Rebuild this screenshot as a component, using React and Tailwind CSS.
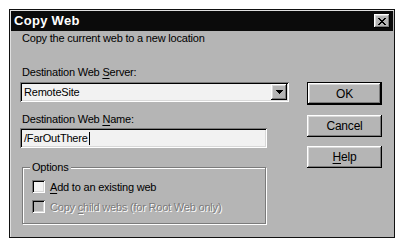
const raised = 'shadow-[inset_-1px_-1px_0_#000,inset_1px_1px_0_#fff,inset_-2px_-2px_0_#7b7b7b,inset_2px_2px_0_#d8d8d8]'
const sunken = 'shadow-[inset_1px_1px_0_#7b7b7b,inset_-1px_-1px_0_#fff,inset_2px_2px_0_#000,inset_-2px_-2px_0_#d8d8d8]'

function Btn({ children, isDefault, className = '' }) {
  return (
    <button className={`w-[75px] ${isDefault ? 'border border-black' : ''} ${className}`}>
      <div className={`flex h-full w-full items-center justify-center bg-[#b5b5b5] text-[12px] ${raised}`}>{children}</div>
    </button>
  )
}

function Check({ disabled, children }) {
  return (
    <div className="flex h-[13px] items-center">
      <div className={`h-[13px] w-[13px] ${disabled ? 'bg-[#b5b5b5]' : 'bg-[#f2f2f2]'} ${sunken}`} />
      <span className={`ml-[5px] leading-[14px] ${disabled ? 'text-[#7b7b7b] [text-shadow:1px_1px_0_#fff]' : ''}`}>{children}</span>
    </div>
  )
}

export default function App() {
  return (
    <div className="min-h-screen bg-white pl-[9px] pt-[9px] text-[11px] tracking-[-0.2px] text-black" style={{ fontFamily: '"Liberation Sans", Arial, sans-serif' }}>
      <div className="flex h-[229px] w-[386px] flex-col border border-[#111] bg-[#b5b5b5] p-[1px] shadow-[inset_1px_1px_0_#e0e0e0]">
        <div className="flex h-[20px] items-center justify-between bg-[#0b0b0b] pl-[3px] pr-[3px]">
          <span className="text-[13px] font-bold tracking-[0.3px] text-white">Copy Web</span>
          <div className={`flex h-[14px] w-[16px] items-center justify-center bg-[#b5b5b5] ${raised}`}>
            <svg width="8" height="7" viewBox="0 0 8 7" shapeRendering="crispEdges">
              <path d="M0 0h2v1h-2zM6 0h2v1h-2zM1 1h2v1h-2zM5 1h2v1h-2zM2 2h4v1h-4zM3 3h2v1h-2zM2 4h4v1h-4zM1 5h2v1h-2zM5 5h2v1h-2zM0 6h2v1h-2zM6 6h2v1h-2z" fill="#000" />
            </svg>
          </div>
        </div>

        <div className="flex flex-1 pl-[9px]">
          <div className="flex w-[269px] flex-col">
            <div className="h-[14px] pl-[2px] leading-[14px]">Copy the current web to a new location</div>
            <div className="mt-[20px] h-[14px] pl-[2px] leading-[14px]">
              Destination Web <span className="underline underline-offset-[2px]">S</span>erver:
            </div>
            <div className={`mt-[3px] flex h-[20px] items-center bg-[#f2f2f2] pl-[4px] pr-[2px] ${sunken}`}>
              <span className="flex-1">RemoteSite</span>
              <div className={`flex h-[16px] w-[16px] items-center justify-center bg-[#b5b5b5] ${raised}`}>
                <svg width="7" height="4" viewBox="0 0 7 4" shapeRendering="crispEdges">
                  <path d="M0 0h7v1h-7zM1 1h5v1h-5zM2 2h3v1h-3zM3 3h1v1h-1z" fill="#000" />
                </svg>
              </div>
            </div>
            <div className="mt-[10px] h-[14px] pl-[2px] leading-[14px]">
              Destination Web <span className="underline underline-offset-[2px]">N</span>ame:
            </div>
            <div className={`mt-[2px] flex h-[20px] w-[247px] items-center bg-[#f2f2f2] pl-[4px] ${sunken}`}>
              <span>/FarOutThere</span>
              <span className="ml-[1px] h-[13px] w-[1px] bg-black" />
            </div>
            <div className="relative ml-[2px] mt-[19px] h-[57px] w-[244px] border border-[#7b7b7b] shadow-[inset_1px_1px_0_#fff,1px_1px_0_#fff] pl-[9px] pt-[12px]">
              <span className="absolute -top-[8px] left-[7px] bg-[#b5b5b5] px-[2px] leading-[14px]">Options</span>
              <Check>
                <span className="underline underline-offset-[2px]">A</span>dd to an existing web
              </Check>
              <div className="mt-[7px]">
                <Check disabled>
                  Copy <span className="underline underline-offset-[2px]">c</span>hild webs (for Root Web only)
                </Check>
              </div>
            </div>
          </div>

          <div className="ml-[18px] flex flex-col">
            <Btn isDefault className="mt-[51px] h-[23px]">OK</Btn>
            <Btn className="mt-[10px] h-[22px]">Cancel</Btn>
            <Btn className="mt-[9px] h-[22px]">
              <span><span className="underline underline-offset-[2px]">H</span>elp</span>
            </Btn>
          </div>
        </div>
      </div>
    </div>
  )
}
